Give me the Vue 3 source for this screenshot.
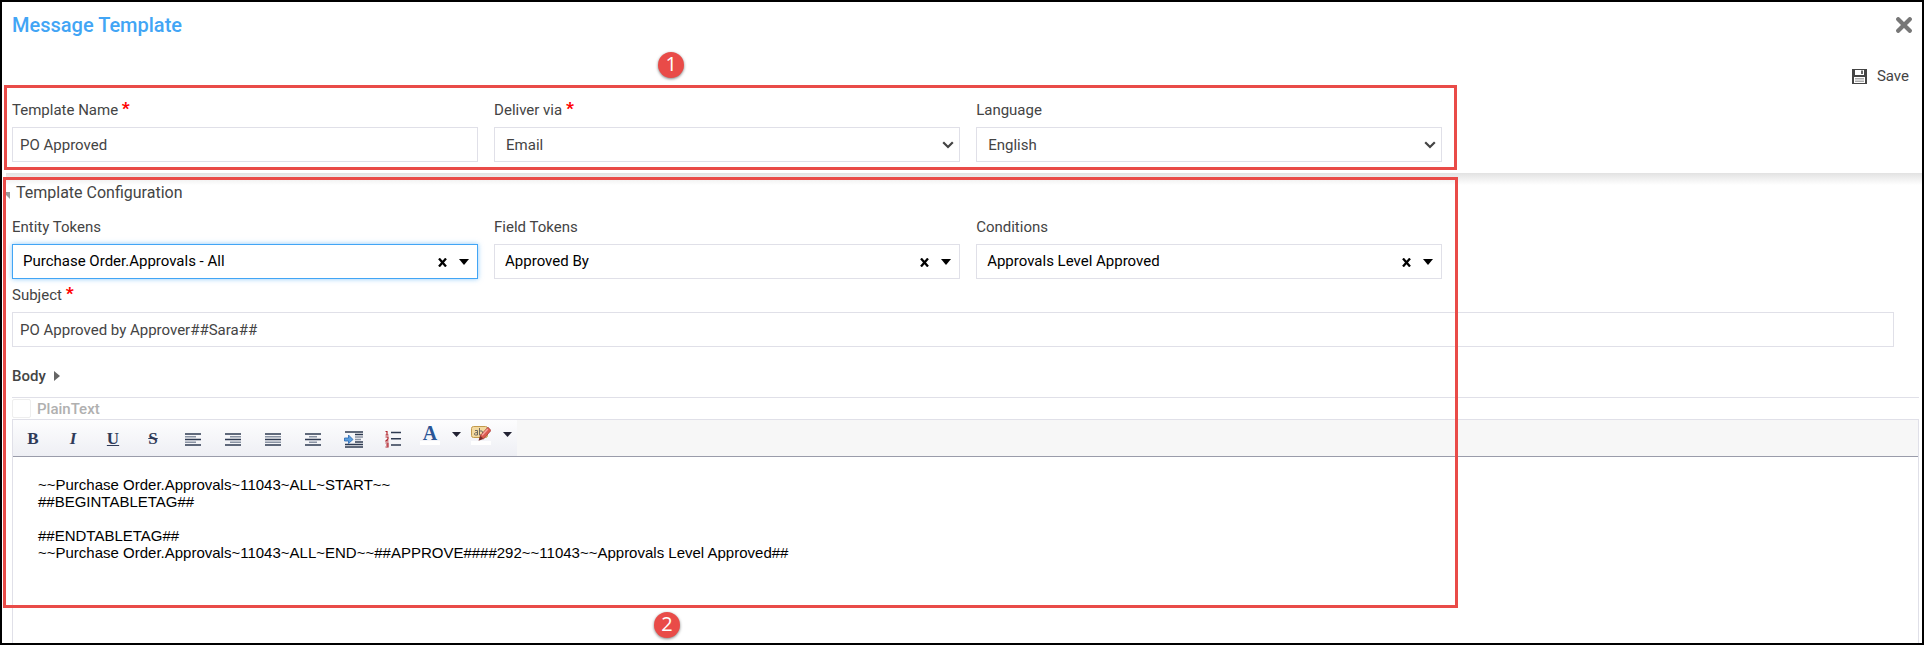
<template>
  <div class="page">
    <header class="header">
      <div class="header__top">
        <h1 class="header__title">Message Template</h1>
        <button type="button" class="icon-button" aria-label="Close">
          <svg width="16" height="16" viewBox="0 0 16 16">
            <path d="M2.2 2.2L13.8 13.8M13.8 2.2L2.2 13.8" stroke="#777" stroke-width="4.2" stroke-linecap="round" />
          </svg>
        </button>
      </div>

      <div class="header__actions">
        <button type="button" class="save-button">
          <svg width="15" height="15" viewBox="0 0 15 15">
            <path d="M0 0H15V15H0Z" fill="#444" />
            <path d="M3 1H12V6H3Z" fill="#fff" />
            <path d="M9 1.5H11V5H9Z" fill="#666" />
            <path d="M2 8H13V14H2Z" fill="#fff" />
            <path d="M3 9.5H12M3 11H12M3 12.5H12" stroke="#aaa" />
          </svg>
          Save
        </button>
      </div>

      <div class="header__form">
        <div class="fields">
          <div class="field">
            <label class="field__label" for="templateName">
              Template Name <span class="required">*</span>
            </label>
            <input id="templateName" v-model="templateName" type="text" class="control" />
          </div>
          <div v-for="item in selects" :key="item.id" class="field">
            <label class="field__label" :for="item.id">
              {{ item.label }} <span v-if="item.required" class="required">*</span>
            </label>
            <div class="select">
              <select :id="item.id" class="control control--select">
                <option>{{ item.value }}</option>
              </select>
              <svg class="select__arrow" width="12" height="8" viewBox="0 0 12 8">
                <path d="M1.2 1.2L6 6L10.8 1.2" fill="none" stroke="#444" stroke-width="2.2" />
              </svg>
            </div>
          </div>
        </div>
        <div class="callout callout--header">
          <span class="callout__badge callout__badge--top">1</span>
        </div>
      </div>
    </header>

    <main class="config">
      <h2 class="config__title">
        <svg class="config__toggle" width="4" height="7" viewBox="0 0 4 7">
          <path d="M0 0H4V7L0 3Z" fill="#999" />
        </svg>
        Template Configuration
      </h2>

      <div class="fields">
        <div v-for="token in tokens" :key="token.id" class="field">
          <label class="field__label" :for="token.id">{{ token.label }}</label>
          <div class="select">
            <select
              :id="token.id"
              v-model="token.value"
              class="control control--token"
              :class="{ 'control--active': token.id === activeToken }"
              @focus="activeToken = token.id"
            >
              <option>{{ token.value }}</option>
            </select>
            <button type="button" class="select__clear" aria-label="Clear" @click="token.value = ''">
              <svg width="9" height="9" viewBox="0 0 9 9">
                <path d="M1 0.5L8 8.5M8 0.5L1 8.5" stroke="#000" stroke-width="2.3" />
              </svg>
            </button>
            <svg class="select__caret" width="10" height="6" viewBox="0 0 10 6">
              <path d="M0 0H10L5 6Z" />
            </svg>
          </div>
        </div>
      </div>

      <div class="field field--subject">
        <label class="field__label" for="subject">Subject <span class="required">*</span></label>
        <input id="subject" v-model="subject" type="text" class="control" />
      </div>

      <h3 class="config__body-title">
        Body
        <svg width="6" height="10" viewBox="0 0 6 10"><path d="M0 0L6 5L0 10Z" fill="#666" /></svg>
      </h3>

      <div class="plain-text">
        <input id="plainText" v-model="plainText" type="checkbox" class="plain-text__box" />
        <label for="plainText">PlainText</label>
      </div>

      <div class="editor">
        <div class="toolbar">
          <div class="toolbar__group">
            <button
              v-for="style in textStyles"
              :key="style.name"
              type="button"
              class="toolbar__button"
              :class="'toolbar__button--' + style.name"
              :aria-label="style.name"
            >
              {{ style.letter }}
            </button>
            <button
              v-for="icon in lineIcons"
              :key="icon.name"
              type="button"
              class="toolbar__button"
              :aria-label="icon.name"
            >
              <svg width="16" height="13" viewBox="0 0 16 13">
                <path :d="icon.light" stroke="#8a93a3" stroke-width="1.6" />
                <path :d="icon.dark" stroke="#2f3b52" stroke-width="1.4" />
              </svg>
            </button>
            <button type="button" class="toolbar__button" aria-label="indent">
              <svg width="19" height="17" viewBox="0 0 19 17">
                <path d="M1 1H19M1 13.5H19M1 16H19M11 3.5H19M11 11H19" stroke="#2f3b52" stroke-width="1.4" />
                <path d="M11 6H19M11 8.5H17" stroke="#8a93a3" stroke-width="1.6" />
                <path d="M0.5 7H4.5V4L9 8.5L4.5 12.5V10H0.5Z" fill="#5b9fe0" stroke="#2a67b0" stroke-width="0.8" />
              </svg>
            </button>
            <button type="button" class="toolbar__button" aria-label="numbered list">
              <svg width="16" height="18" viewBox="0 0 16 18">
                <path d="M6 2.5H16M6 8.8H16M6 15H16" stroke="#2f3b52" stroke-width="1.4" />
                <path
                  d="M0.5 1.5H2V5M0.5 5H3.5M0.5 7H3V9L0.8 11H3.5M0.5 13H3V17H0.5M1 15H3"
                  fill="none"
                  stroke="#b3262e"
                  stroke-width="1.2"
                />
              </svg>
            </button>
            <button type="button" class="toolbar__color" aria-label="text color">
              <span class="toolbar__letter">A</span>
              <svg class="toolbar__caret" width="9" height="5" viewBox="0 0 9 5"><path d="M0 0H9L4.5 5Z" /></svg>
            </button>
            <button type="button" class="toolbar__color" aria-label="highlight color">
              <span class="toolbar__letter">
                <svg width="20" height="15" viewBox="0 0 20 15">
                  <rect x="0.5" y="0.5" width="16" height="11" rx="2" fill="#f3d9a0" stroke="#c29a4c" />
                  <path
                    d="M4 4.5H6.5V9H4.5Q3 9 3.5 7.5Q4 6.5 6.5 6.5M8.5 2V9H11Q12.5 7 11 5H8.5"
                    fill="none"
                    stroke="#6f6a60"
                    stroke-width="1"
                  />
                  <path d="M17 1.2L20 4.5L12.5 13L9 9.8Z" fill="#dd5a50" stroke="#9b3530" stroke-width="0.7" />
                  <path d="M9 9.8L12.5 13L7.5 14.8Z" fill="#7b2b28" />
                  <path d="M16.8 3L11 9.3" stroke="#f5a79f" stroke-width="1.4" />
                </svg>
              </span>
              <svg class="toolbar__caret" width="9" height="5" viewBox="0 0 9 5"><path d="M0 0H9L4.5 5Z" /></svg>
            </button>
          </div>
        </div>
        <textarea v-model="body" class="editor__text" aria-label="Body" spellcheck="false"></textarea>
      </div>

      <div class="callout callout--config">
        <span class="callout__badge callout__badge--bottom">2</span>
      </div>
    </main>
  </div>
</template>

<script setup>
import { ref } from 'vue'

const templateName = ref('PO Approved')
const subject = ref('PO Approved by Approver##Sara##')
const plainText = ref(false)
const activeToken = ref('entityTokens')

const selects = [
  { id: 'deliverVia', label: 'Deliver via', value: 'Email', required: true },
  { id: 'language', label: 'Language', value: 'English', required: false },
]

const tokens = ref([
  { id: 'entityTokens', label: 'Entity Tokens', value: 'Purchase Order.Approvals - All' },
  { id: 'fieldTokens', label: 'Field Tokens', value: 'Approved By' },
  { id: 'conditions', label: 'Conditions', value: 'Approvals Level Approved' },
])

const body = ref(
  [
    '~~Purchase Order.Approvals~11043~ALL~START~~',
    '##BEGINTABLETAG##',
    '',
    '##ENDTABLETAG##',
    '~~Purchase Order.Approvals~11043~ALL~END~~##APPROVE####292~~11043~~Approvals Level Approved##',
  ].join('\n')
)

const textStyles = [
  { name: 'bold', letter: 'B' },
  { name: 'italic', letter: 'I' },
  { name: 'underline', letter: 'U' },
  { name: 'strike', letter: 'S' },
]

const lineIcons = [
  { name: 'align left', dark: 'M0 1H16M0 6.5H16M0 12H16', light: 'M0 3.8H11M0 9.2H11' },
  { name: 'align right', dark: 'M0 1H16M0 6.5H16M0 12H16', light: 'M5 3.8H16M5 9.2H16' },
  { name: 'justify', dark: 'M0 1H16M0 6.5H16M0 12H16', light: 'M0 3.8H16M0 9.2H16' },
  { name: 'align center', dark: 'M0 1H16M0 6.5H16M0 12H16', light: 'M4 3.8H12M4 9.2H12' },
]
</script>

<style>
body {
  margin: 0;
}
</style>

<style scoped>
.page {
  display: flex;
  flex-direction: column;
  box-sizing: border-box;
  min-height: 100vh;
  border: 2px solid #000;
  background-color: #fff;
  font-family: Roboto, 'Liberation Sans', sans-serif;
  font-size: 15px;
  color: #444;
}

button {
  padding: 0;
  border: none;
  background: none;
  font: inherit;
  color: inherit;
  cursor: pointer;
}

svg {
  display: block;
}

.header {
  padding: 11px 3px 11px 10px;
}

.header__top {
  display: flex;
  align-items: center;
  justify-content: space-between;
  padding-right: 7px;
}

.header__title {
  margin: 0;
  font-size: 20px;
  line-height: 24px;
  font-weight: 500;
  color: #42a5f5;
}

.header__actions {
  display: flex;
  justify-content: flex-end;
  padding: 29px 10px 0 0;
}

.save-button {
  display: flex;
  align-items: center;
  gap: 10px;
  line-height: 20px;
}

.header__form {
  position: relative;
  padding-top: 14px;
}

.fields {
  display: grid;
  grid-template-columns: repeat(3, 1fr);
  gap: 16px;
  width: 75%;
}

.field {
  display: flex;
  flex-direction: column;
  gap: 7px;
  min-width: 0;
}

.field--subject {
  margin-right: 25px;
  padding-top: 6px;
}

.field__label {
  height: 20px;
  line-height: 20px;
}

.required {
  font-size: 17px;
  line-height: 1;
  font-weight: 900;
  vertical-align: 1px;
  color: #f00;
}

.control {
  box-sizing: border-box;
  width: 100%;
  height: 35px;
  padding: 0 7px;
  border: 1px solid #e0e0e8;
  border-radius: 0;
  background-color: #fff;
  font: inherit;
  color: #444;
  outline: none;
}

.control--select,
.control--token {
  appearance: none;
  padding: 0 30px 0 11px;
}

.control--token {
  padding: 0 48px 2px 10px;
  color: #000;
}

.control--active {
  border-color: #42a5f5;
  box-shadow: 0 0 5px rgba(66, 165, 245, 0.6);
}

.select {
  position: relative;
}

.select__arrow {
  position: absolute;
  top: 14px;
  right: 6px;
  pointer-events: none;
}

.select__clear {
  position: absolute;
  top: 14px;
  right: 31px;
}

.select__caret {
  position: absolute;
  top: 15px;
  right: 9px;
  pointer-events: none;
}

.config {
  position: relative;
  display: flex;
  flex-direction: column;
  flex-grow: 1;
  margin-left: 4px;
  padding: 10px 3px 0 6px;
  background: linear-gradient(#e2e2e2, #fff 12px);
}

.config__title {
  display: flex;
  align-items: center;
  gap: 6px;
  margin: 0 0 14px -6px;
  font-size: 16px;
  line-height: 20px;
  font-weight: 400;
}

.config__toggle {
  margin-top: 4px;
}

.config__body-title {
  display: flex;
  align-items: center;
  gap: 8px;
  margin: 19px 0 11px;
  font-size: 15px;
  line-height: 20px;
  font-weight: 500;
}

.plain-text {
  display: flex;
  align-items: center;
  gap: 6px;
  height: 21px;
  border-top: 1px solid #e0e0e8;
  font-weight: 500;
  color: #b0b0b0;
}

.plain-text__box {
  appearance: none;
  width: 19px;
  height: 19px;
  margin: 0;
  border: 1px solid #eee;
  border-radius: 2px;
}

.editor {
  display: flex;
  flex-direction: column;
  flex-grow: 1;
  border: 1px solid #e0e0e8;
  border-bottom: none;
}

.toolbar {
  border-bottom: 1px solid #9a9caa;
  background-color: #f7f7f7;
}

.toolbar__group {
  display: flex;
  width: max-content;
  height: 36px;
  padding-right: 2px;
  background: linear-gradient(#fdfdfe, #eeeff4);
}

.toolbar__button {
  display: flex;
  align-items: center;
  justify-content: center;
  width: 40px;
  padding-top: 2px;
  font-family: 'Liberation Serif', serif;
  font-size: 17px;
  font-weight: 700;
  color: #2f3b58;
}

.toolbar__button--italic {
  font-style: italic;
}

.toolbar__button--underline {
  text-decoration: underline;
}

.toolbar__button--strike {
  text-decoration: line-through;
}

.toolbar__color {
  display: flex;
  align-items: flex-start;
  gap: 12px;
  width: 51px;
  padding: 6px 0 0 7px;
}

.toolbar__letter {
  width: 20px;
  height: 15px;
  border-bottom: 4px solid #fff;
  font-family: 'Liberation Serif', serif;
  font-size: 20px;
  line-height: 15px;
  font-weight: 700;
  color: #2a5596;
}

.toolbar__caret {
  margin-top: 6px;
  fill: #223;
}

.editor__text {
  box-sizing: border-box;
  flex-grow: 1;
  width: 100%;
  min-height: 150px;
  padding: 19px 25px;
  border: none;
  background: none;
  font-family: 'Liberation Sans', Arial, sans-serif;
  font-size: 15px;
  line-height: 17px;
  color: #000;
  resize: none;
  outline: none;
}

/* numbered outlines drawn over the form */
.callout {
  position: absolute;
  box-sizing: border-box;
  border: 3px solid #e94b48;
  pointer-events: none;
}

.callout--header {
  top: -1px;
  bottom: -8px;
  left: -8px;
  width: calc(75% + 23px);
}

.callout--config {
  top: 4px;
  bottom: 35px;
  left: -3px;
  width: calc(75% + 18px);
}

.callout__badge {
  position: absolute;
  left: 45%;
  width: 26px;
  height: 26px;
  border-radius: 50%;
  background-color: #e94b48;
  box-shadow: 0 1px 3px rgba(0, 0, 0, 0.5);
  font-family: 'Open Sans', sans-serif;
  font-size: 20px;
  line-height: 24px;
  text-align: center;
  color: #fff;
}

.callout__badge--top {
  top: -36px;
}

.callout__badge--bottom {
  bottom: -33px;
  left: calc(45% - 4px);
}
</style>
